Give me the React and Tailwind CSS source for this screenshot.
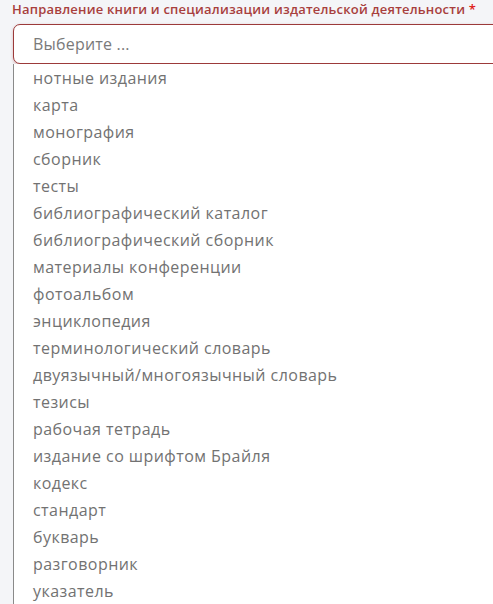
export default function App() {
  const items = [
    "нотные издания",
    "карта",
    "монография",
    "сборник",
    "тесты",
    "библиографический каталог",
    "библиографический сборник",
    "материалы конференции",
    "фотоальбом",
    "энциклопедия",
    "терминологический словарь",
    "двуязычный/многоязычный словарь",
    "тезисы",
    "рабочая тетрадь",
    "издание со шрифтом Брайля",
    "кодекс",
    "стандарт",
    "букварь",
    "разговорник",
    "указатель",
  ];
  return (
    <div className="w-[493px] h-[604px] overflow-hidden bg-[#f4f5f8] font-['Open_Sans',sans-serif]">
      <div className="pl-[13px] pt-0">
        <div className="text-[13px] leading-[16px] font-semibold tracking-[0.2px] text-[#a83f3d] pt-[1px] -ml-[1px] whitespace-nowrap">
          Направление книги и специализации издательской деятельности <span className="text-[#e02020]">*</span>
        </div>
        <div className="mt-[7px] h-[40px] w-[500px] rounded-l-[7px] border border-[#9c3a3a] bg-white shadow-[0_1px_3px_rgba(156,58,58,0.35)] flex items-center pl-[19px] text-[16px] tracking-[0.2px] text-[#7a7a7a]">
          Выберите ...
        </div>
        <div className="w-[500px] bg-white border-l border-[#8a8a8a] pt-[1px]">
          {items.map((t) => (
            <div key={t} className="h-[27px] leading-[27px] pl-[19px] text-[16px] tracking-[0.45px] text-[#727272] whitespace-nowrap">
              {t}
            </div>
          ))}
        </div>
      </div>
    </div>
  );
}
